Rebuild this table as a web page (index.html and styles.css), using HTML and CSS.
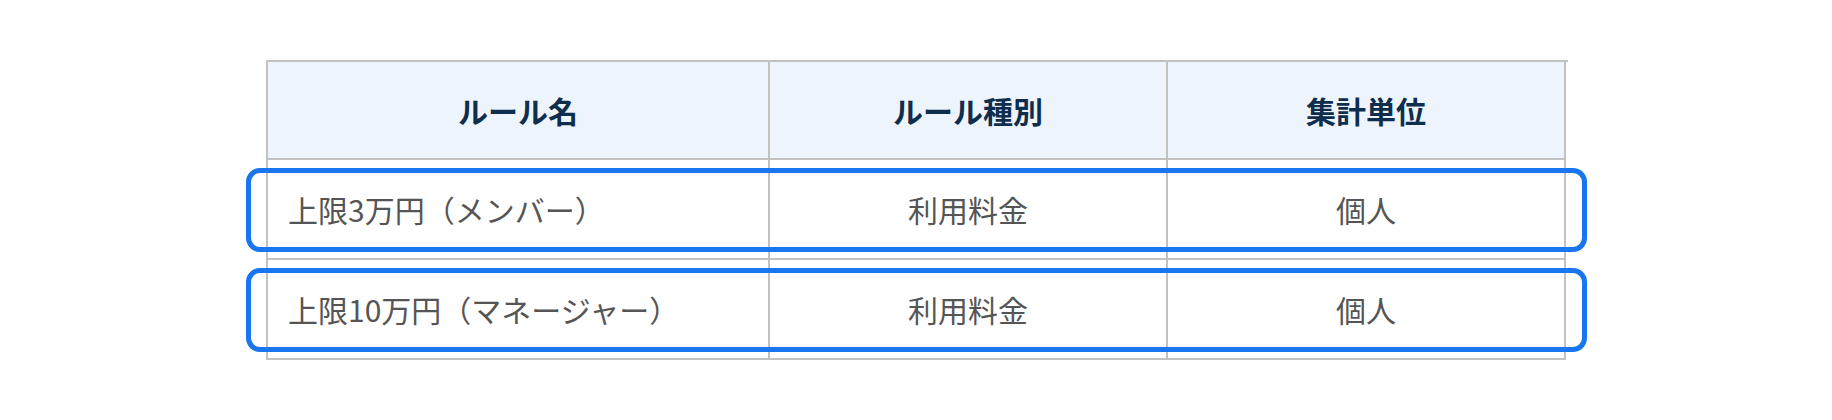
FILE: index.html
```html
<!DOCTYPE html>
<html lang="ja">
<head>
<meta charset="utf-8">
<link rel="stylesheet" href="styles.css">
</head>
<body>
<div class="table">
  <div class="row head">
    <div class="cell center">ルール名</div>
    <div class="cell center">ルール種別</div>
    <div class="cell center">集計単位</div>
  </div>
  <div class="row body">
    <div class="cell left">上限3万円（メンバー）</div>
    <div class="cell center">利用料金</div>
    <div class="cell center">個人</div>
    <span class="highlight"></span>
  </div>
  <div class="row body">
    <div class="cell left">上限10万円（マネージャー）</div>
    <div class="cell center">利用料金</div>
    <div class="cell center">個人</div>
    <span class="highlight"></span>
  </div>
</div>
</body>
</html>
```
FILE: styles.css
```css
html, body {
  margin: 0;
  padding: 0;
  background: #ffffff;
}
body {
  font-family: "Noto Sans CJK JP", "Noto Sans", sans-serif;
  width: 1832px;
  height: 420px;
  overflow: hidden;
}
.table {
  margin: 60px 0 0 266px;
  width: 1300px;
  border-left: 2px solid #c2c2c2;
  border-top: 2px solid #c2c2c2;
  display: flex;
  flex-direction: column;
}
.row {
  position: relative;
  display: grid;
  grid-template-columns: 502px 398px 398px;
}
.cell {
  border-right: 2px solid #c2c2c2;
  border-bottom: 2px solid #c2c2c2;
  display: flex;
  align-items: center;
  font-size: 30px;
  line-height: 1;
}
.head .cell {
  height: 96px;
  background: #eef4fb;
  color: #0f2e4e;
  font-weight: 700;
}
.body .cell {
  height: 98px;
  color: #555555;
}
.center {
  justify-content: center;
}
.left {
  padding-left: 20px;
}
.highlight {
  position: absolute;
  left: -22px;
  right: -19px;
  top: 8px;
  bottom: 8px;
  border: 5px solid #1a76f0;
  border-radius: 14px;
  pointer-events: none;
}
```
